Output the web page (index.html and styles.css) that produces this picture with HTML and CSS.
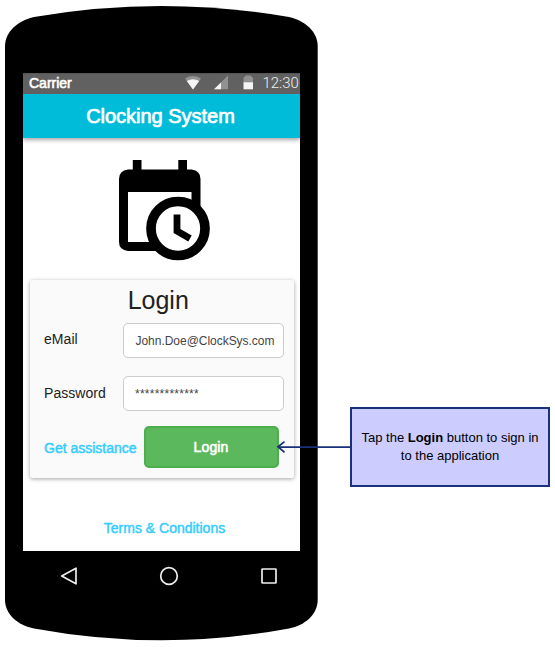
FILE: index.html
```html
<!DOCTYPE html>
<html lang="en">
<head>
<meta charset="utf-8">
<title>Clocking System</title>
<link rel="stylesheet" href="styles.css">
</head>
<body>
<main class="board">
  <section class="phone">
    <svg class="phone-shell" viewBox="0 0 313 635" aria-hidden="true"><path d="M0 40C0 26 13 14.500 29 11Q156.500 -11 284 11C300 14.500 312.700 26 312.700 40V594C312.700 608 300 619.500 284 622.500Q156.500 646 29 622.500C13 619.500 0 608 0 594Z"/></svg>
    <div class="screen">
      <div class="status">
        <span class="carrier">Carrier</span>
        <svg class="status-icons" width="70" height="17" viewBox="0 0 70 17" aria-hidden="true">
          <path fill="#929292" d="M0 2.500Q8 -2.300 16 2.500L8 13.500Z"/><path fill="#f5f5f5" d="M1.800 5Q8 1.300 14.200 5L8 13.500Z"/>
          <path fill="#929292" d="M43 -.5V13.300H29Z"/><path fill="#f5f5f5" d="M36 6.500V13.300H29Z"/>
          <path fill="#929292" d="M60.500 -.5H66V.3Q68 .5 68 2.500V7H58.500V2.500Q58.500 .5 60.500 .3Z"/><path fill="#f5f5f5" d="M58.500 6.300H68V13.300H58.500Z"/>
        </svg>
        <span class="time">12:30</span>
      </div>
      <header class="appbar"><h1>Clocking System</h1></header>
      <svg class="logo" width="92" height="102" viewBox="0 0 92 102" aria-hidden="true">
        <path d="M13.800 0H22.500V9.500H59.300V0H68V9.500H72.500Q81.500 10.500 81.500 19V60H72.500V32H9V82H45V91H9Q0 90 0 82V19Q0 10.500 9 9.500H13.800Z"/>
        <circle cx="59" cy="68.500" r="27" fill="#fff" stroke="#000" stroke-width="9.700"/>
        <path d="M58 54.500V71L71 78.500" fill="none" stroke="#000" stroke-width="6.800"/>
      </svg>
      <form class="card">
        <h2>Login</h2>
        <div class="row"><label>eMail</label><div class="field">John.Doe@ClockSys.com</div></div>
        <div class="row"><label>Password</label><div class="field stars">*************</div></div>
        <div class="actions"><a class="link assist">Get assistance</a><button type="button" class="login"><span>Login</span></button></div>
      </form>
      <a class="link terms">Terms &amp; Conditions</a>
    </div>
    <nav class="nav">
      <svg width="20" height="20" viewBox="0 0 20 20"><path d="M17 2.200V17.800L2.700 10Z"/></svg>
      <svg width="20" height="20" viewBox="0 0 20 20"><circle cx="10" cy="10" r="8.300"/></svg>
      <svg width="20" height="20" viewBox="0 0 20 20"><rect x="3" y="3" width="14" height="14" rx=".6"/></svg>
    </nav>
  </section>
  <aside class="callout">
    <svg class="arrow" width="75" height="14" viewBox="0 0 75 14" aria-hidden="true"><path d="M2 6.800L75 7.200M8.500 1.600L2 6.800L8.500 12.400"/></svg>
    <p>Tap the <b>Login</b> button to sign in<br>to the application</p>
  </aside>
</main>
</body>
</html>
```
FILE: styles.css
```css
* { box-sizing: border-box; }
body { margin: 0; background: #fff; font-family: "Liberation Sans", Arial, sans-serif; }
h1, h2, p { margin: 0; font-weight: 400; }
.board { display: flex; align-items: flex-start; gap: 32px; width: 555px; height: 647px; padding: 6px 5px; overflow: hidden; }
.phone { position: relative; width: 313px; height: 635px; flex: none; padding: 67px 18px 0; }
.phone-shell { position: absolute; inset: 0; width: 313px; height: 635px; overflow: visible; }
.screen { position: relative; display: flex; flex-direction: column; align-items: center; width: 277px; height: 478px; background: #fff; }
.status { display: flex; width: 277px; height: 21px; flex: none; align-items: center; background: #616161; border-top: 1px solid #555; color: #fff; }
.carrier { width: 162px; padding-left: 6px; margin-top: -2px; font-size: 14px; letter-spacing: 0; -webkit-text-stroke: .6px #fff; }
.status-icons { flex: none; margin-top: 1px; overflow: visible; }
.time { width: 45px; padding-left: 7.500px; margin-top: -2px; font: 300 14.900px Roboto, sans-serif; color: #eee; white-space: nowrap; }
.appbar { display: flex; align-items: center; justify-content: center; width: 277px; height: 44px; flex: none; background: #00bcd8; box-shadow: 0 2px 4px rgba(0,0,0,.35); clip-path: inset(0 0 -8px 0); }
.appbar h1 { color: #fff; font-size: 20px; line-height: 24px; letter-spacing: -.02px; padding-right: 2px; -webkit-text-stroke: .7px #fff; }
.logo { flex: none; margin: 22px 0 18px 7.500px; }
.card { width: 264px; height: 198px; flex: none; padding: 5px 9px 0 14.500px; border-radius: 2px; background: #fafafa; box-shadow: 0 1px 4px rgba(0,0,0,.36); color: #212121; }
.card h2 { font-size: 25px; line-height: 30px; text-align: center; padding-right: 12px; }
.row { display: flex; width: 240px; height: 35px; margin-bottom: 18px; }
.row:first-of-type { margin-top: 8px; }
.row label { width: 78.500px; padding-top: 8px; font-size: 14px; line-height: 17px; letter-spacing: .05px; }
.row + .row label { padding-top: 9px; }
.field { width: 161px; height: 35px; padding-left: 12px; background: #fff; border: 1px solid #ccc; border-radius: 5px; color: #444; font-size: 12px; line-height: 34.500px; letter-spacing: -.03px; }
.stars { padding-left: 11.500px; letter-spacing: .25px; }
.actions { display: flex; margin-top: -3px; align-items: center; }
.link { color: #33ccff; font-size: 14px; line-height: 18px; -webkit-text-stroke: .45px #33ccff; white-space: nowrap; }
.assist { width: 99.500px; letter-spacing: 0; padding-top: 1px; }
.login { width: 135px; height: 42px; padding: 0; border: 2px solid #4cae4c; border-radius: 5px; background: #5cb85c; color: #fff; font: 14px "Liberation Sans", Arial, sans-serif; letter-spacing: .1px; -webkit-text-stroke: .6px #fff; }
.terms { margin-top: 41px; padding-left: 6px; letter-spacing: 0; }
.nav { position: relative; display: flex; justify-content: space-between; width: 220px; margin: 15px 0 0 36px; }
.nav svg { fill: none; stroke: #eee; stroke-width: 1.700; stroke-linejoin: round; }
.callout { position: relative; display: flex; align-items: center; justify-content: center; width: 200px; height: 80px; flex: none; margin-top: 401px; border: 2px solid #19317b; background: #ccf; text-align: center; color: #000; font-size: 13px; line-height: 18px; }
.callout p { white-space: nowrap; }
.arrow { position: absolute; right: 197px; top: 31px; fill: none; stroke: #19317b; stroke-width: 1.800; }
```
